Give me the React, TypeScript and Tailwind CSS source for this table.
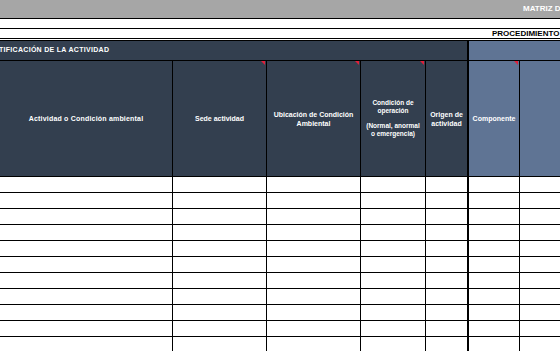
const cols = 'grid grid-cols-[173px_94px_94px_65px_43px_51px_1fr]';

function Flag() {
  return (
    <span className="absolute right-[1px] top-0 h-0 w-0 border-l-[4px] border-t-[4px] border-l-transparent border-t-[#e0203a]" />
  );
}

function HeadCell({
  children,
  className = '',
  flag = false,
}: {
  children?: React.ReactNode;
  className?: string;
  flag?: boolean;
}) {
  return (
    <div
      className={`relative flex flex-col items-center justify-center whitespace-nowrap border-b border-r border-black text-center text-[7px] font-bold leading-[9px] text-white ${className}`}
    >
      {flag && <Flag />}
      {children}
    </div>
  );
}

function DataRow() {
  return (
    <div className={`${cols} h-[16px]`}>
      <div className="border-b border-r border-black" />
      <div className="border-b border-r border-black" />
      <div className="border-b border-r border-black" />
      <div className="border-b border-r border-black" />
      <div className="border-b border-r-2 border-black" />
      <div className="border-b border-r border-black" />
      <div className="border-b border-black" />
    </div>
  );
}

export default function App() {
  return (
    <div
      className="h-[351px] w-[560px] overflow-hidden bg-white"
      style={{ fontFamily: '"Liberation Sans", Arial, sans-serif' }}
    >
      <div className="flex h-[19px] items-center overflow-hidden border-b border-black bg-[#a6a6a6] pl-[523px]">
        <span className="whitespace-nowrap text-[8px] font-bold text-white">MATRIZ DE IDENTIFICACIÓN</span>
      </div>
      <div className="h-[10px] border-b border-black" />
      <div className="flex h-[10px] items-center overflow-hidden border-b border-black pl-[492px]">
        <span className="whitespace-nowrap text-[8px] font-bold leading-none text-black">PROCEDIMIENTO</span>
      </div>
      <div className="h-[2px] border-b border-black" />

      <div className="grid h-[20px] grid-cols-[469px_1fr] border-b border-black">
        <div className="flex items-center overflow-hidden border-r-2 border-black bg-[#333f4f]">
          <span className="-ml-[19px] whitespace-nowrap text-[7px] font-bold tracking-[0.3px] text-white">
            IDENTIFICACIÓN DE LA ACTIVIDAD
          </span>
        </div>
        <div className="bg-[#5f7494]" />
      </div>

      <div className={`${cols} h-[116px]`}>
        <HeadCell className="bg-[#333f4f] tracking-[0.2px]">Actividad o Condición ambiental</HeadCell>
        <HeadCell className="bg-[#333f4f]" flag>
          Sede actividad
        </HeadCell>
        <HeadCell className="bg-[#333f4f]" flag>
          <span>Ubicación de Condición</span>
          <span>Ambiental</span>
        </HeadCell>
        <HeadCell className="gap-[6px] bg-[#333f4f] !text-[6.5px] !leading-[8.5px]" flag>
          <span>
            Condición de
            <br />
            operación
          </span>
          <span>
            (Normal, anormal
            <br />o emergencia)
          </span>
        </HeadCell>
        <HeadCell className="!border-r-2 bg-[#333f4f]">
          <span>Origen de</span>
          <span>actividad</span>
        </HeadCell>
        <HeadCell className="bg-[#5f7494]" flag>
          Componente
        </HeadCell>
        <div className="border-b border-black bg-[#5f7494]" />
      </div>

      {Array.from({ length: 11 }).map((_, i) => (
        <DataRow key={i} />
      ))}
    </div>
  );
}
